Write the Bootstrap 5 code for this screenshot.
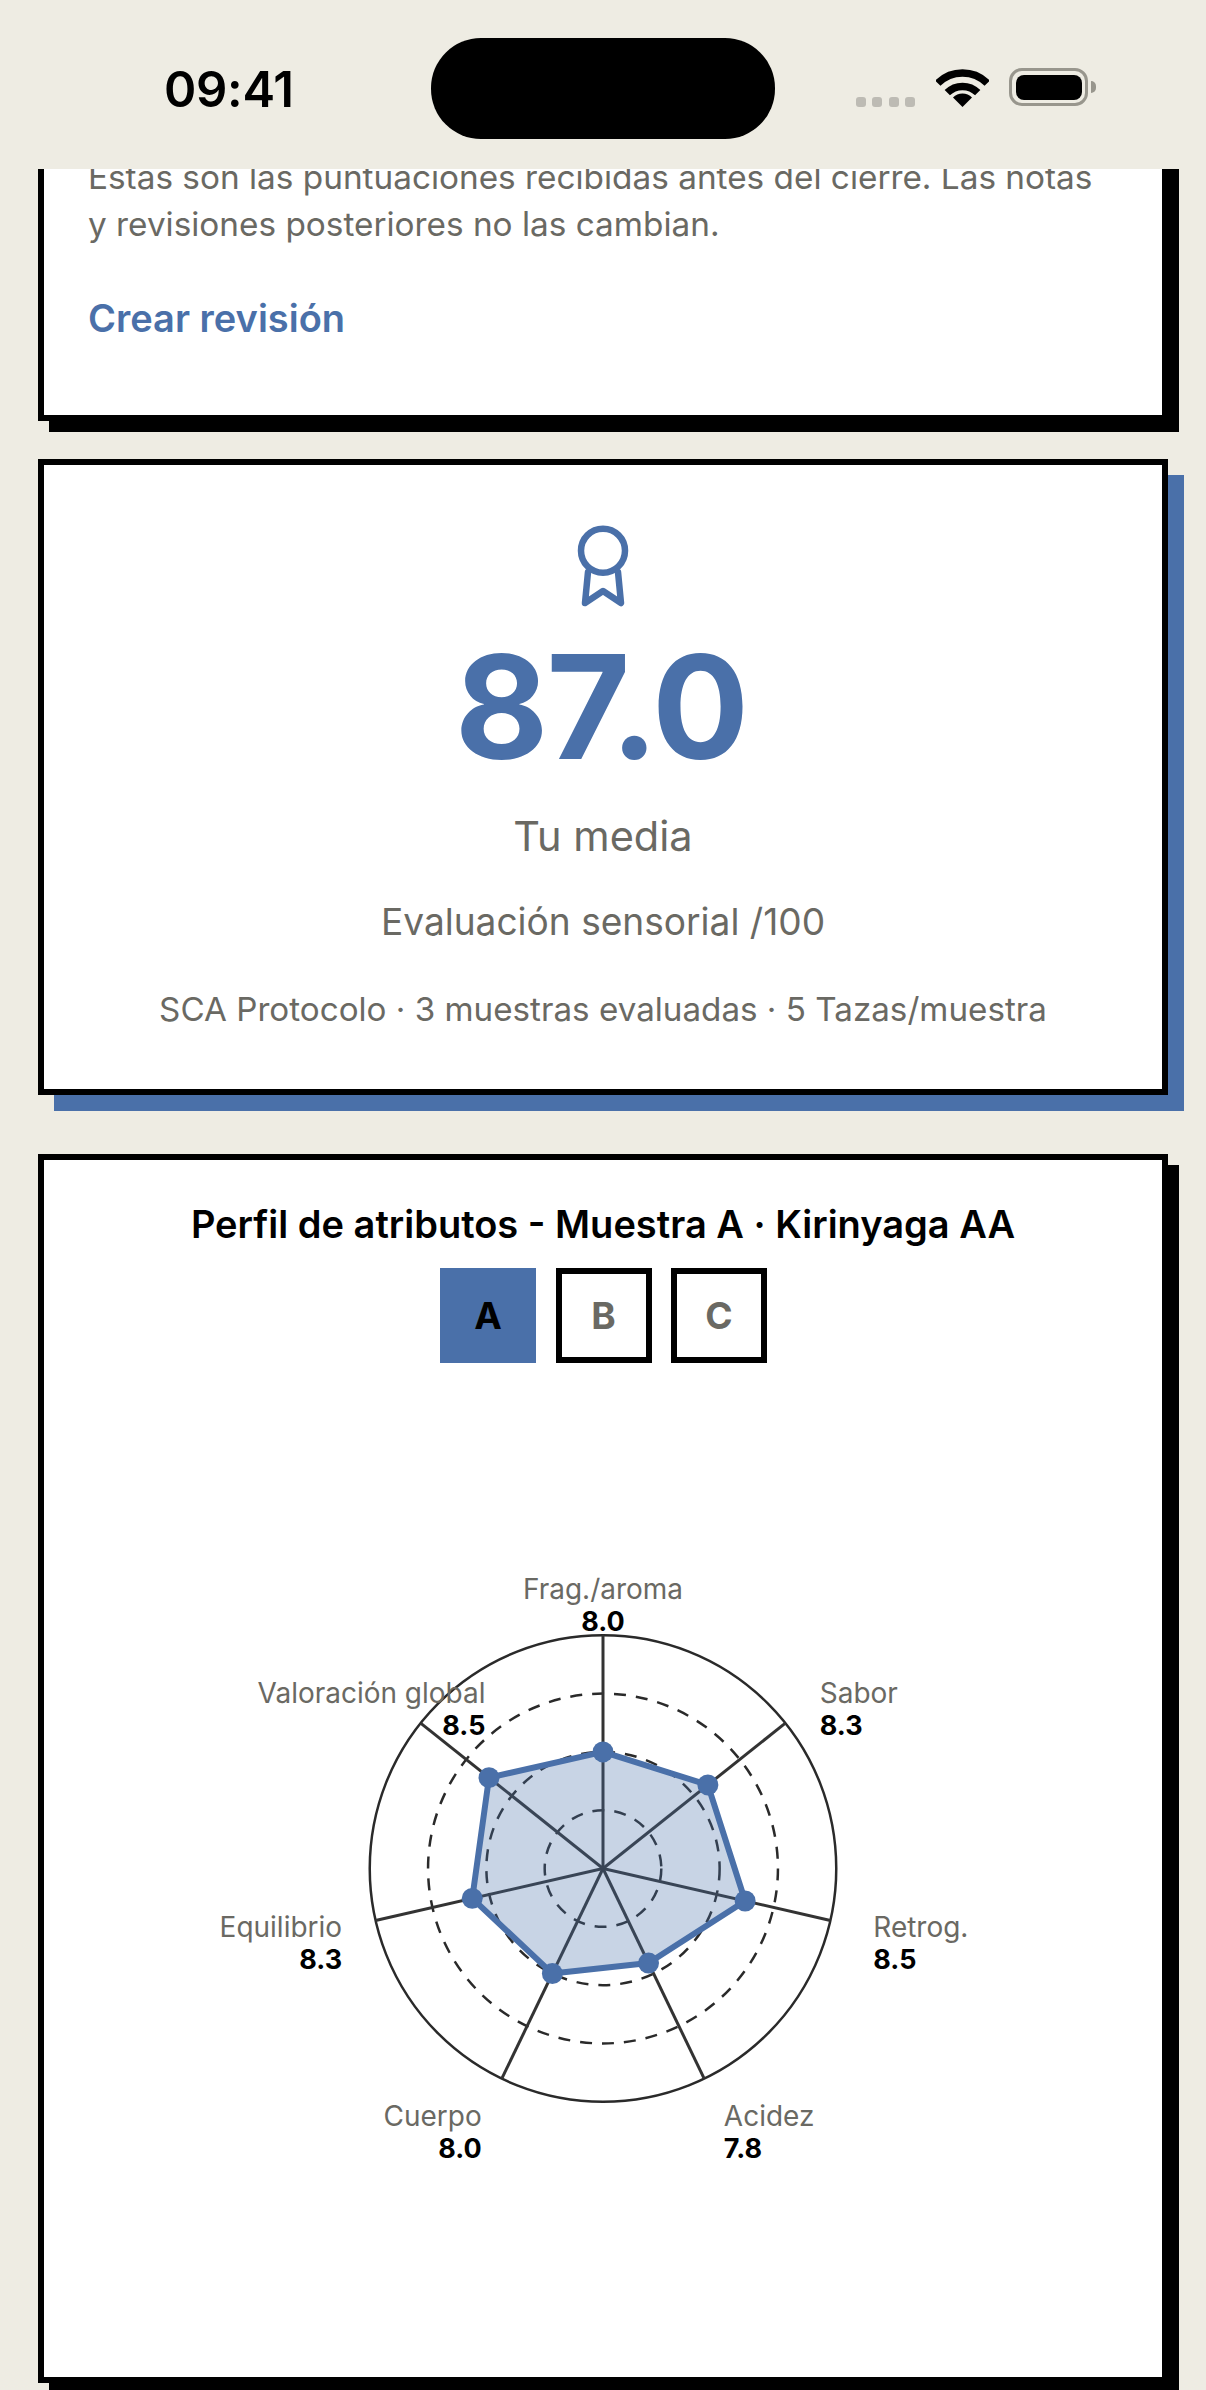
<!doctype html>
<html lang="es">
<head>
<meta charset="utf-8">
<title>Resultados</title>
<link href="https://cdn.jsdelivr.net/npm/bootstrap@5.3.0/dist/css/bootstrap.min.css" rel="stylesheet">
<style>
html,body{margin:0;background:#eeece3;font-family:Inter,"Noto Sans","Liberation Sans",sans-serif;}
body{width:1206px;height:2390px;overflow:hidden;}
.phone-bar{height:169px;background:#eeece3;position:relative;z-index:2;padding-left:164px;}
.clock{width:267px;margin-top:62px;font-size:49px;line-height:56px;font-weight:600;color:#000;letter-spacing:-.3px;}
.island{width:344px;height:101px;margin-top:38px;background:#000;border-radius:50px;}
.bar-icons{margin-left:81px;margin-top:68px;height:39px;}
.sig-dots{width:59px;height:10px;margin-top:29px;margin-right:21px;}
.sig-dots i{width:10px;height:10px;border-radius:3px;background:#bdbbb4;display:block;}
.batt{width:79px;height:38px;border:3.5px solid #98968d;border-radius:13px;padding:3.5px;margin-left:20px;position:relative;}
.batt b{display:block;height:100%;background:#000;border-radius:8px;}
.batt::after{content:"";position:absolute;right:-11px;top:10px;width:5px;height:12px;background:#98968d;border-radius:0 5px 5px 0;}
.scroller{height:2221px;overflow:hidden;}
.sheet{margin:0 38px;border:6px solid #000;border-radius:0;background:#fff;}
.sheet-first{margin-top:-40px;padding:25px 44px 0;height:292px;border-top:0;box-shadow:11px 11px 0 #000;}
.note{font-size:33.35px;line-height:47px;color:#6a6963;margin:0;white-space:nowrap;}
.rev-link{display:block;margin-top:46px;font-size:38px;line-height:48px;font-weight:600;color:#4a70a9;text-decoration:none;}
.sheet-score{margin-top:38px;height:636px;box-shadow:16px 16px 0 #4a70a9;padding-top:60px;}
.medal{display:block;margin:0 auto;width:60px;height:90px;}
.score{font-size:144px;line-height:144px;font-weight:700;color:#4a70a9;margin-top:20px;letter-spacing:-2px;padding-right:4px;}
.s1{font-size:41.5px;line-height:48px;color:#6a6963;margin-top:33px;}
.s2{font-size:37.1px;line-height:44px;color:#6a6963;margin-top:40px;}
.s3{font-size:33.2px;line-height:40px;color:#6a6963;margin-top:45px;}
.sheet-chart{margin-top:59px;height:1229px;box-shadow:11px 11px 0 #000;padding-top:40px;}
.chart-title{font-size:38px;line-height:48px;font-weight:600;color:#000;margin:0;}
.pick-row{margin-top:20px;padding-left:1px;}
.pick{width:96px;height:95px;padding:0;border:6px solid #000;border-radius:0;background:#fff;color:#6a6963;font-size:37px;font-weight:700;line-height:1;}
.pick-next{margin-left:19.5px;}
.pick-on{background:#4a70a9;border-color:#4a70a9;color:#000;}
.radar{display:block;margin-top:37px;}
.lb{font-size:28px;fill:#6a6963;font-family:Inter,"Noto Sans",sans-serif;}
.vl{font-size:27px;font-weight:700;fill:#000;font-family:Inter,"Noto Sans",sans-serif;}
</style>
</head>
<body>
<header class="phone-bar d-flex align-items-start">
  <div class="clock">09:41</div>
  <div class="island"></div>
  <div class="bar-icons d-flex align-items-start">
    <div class="sig-dots d-flex justify-content-between"><i></i><i></i><i></i><i></i></div>
    <svg width="53" height="39" viewBox="0 0 53 39" fill="none"><path d="M1.8 15.2A35 35 0 0 1 51.2 15.2M11.3 24.7A21.5 21.5 0 0 1 41.7 24.7" stroke="#000" stroke-width="7.5"/><path d="M26.5 39L17 29.5A13.4 13.4 0 0 1 36 29.5Z" fill="#000"/></svg>
    <div class="batt"><b></b></div>
  </div>
</header>
<main class="scroller">
  <section class="card sheet sheet-first">
    <p class="note">Estas son las puntuaciones recibidas antes del cierre. Las notas<br>y revisiones posteriores no las cambian.</p>
    <a class="rev-link" href="#">Crear revisión</a>
  </section>
  <section class="card sheet sheet-score text-center">
    <svg class="medal" viewBox="0 0 60 90" fill="none" stroke="#4a70a9" stroke-width="6.5" stroke-linecap="round" stroke-linejoin="round"><circle cx="30" cy="25.7" r="22"/><path d="M15 47L12 78L30 66L48 78L45 47"/></svg>
    <div class="score">87.0</div>
    <div class="s1">Tu media</div>
    <div class="s2">Evaluación sensorial /100</div>
    <div class="s3">SCA Protocolo · 3 muestras evaluadas · 5 Tazas/muestra</div>
  </section>
  <section class="card sheet sheet-chart text-center">
    <h2 class="chart-title">Perfil de atributos - Muestra A · Kirinyaga AA</h2>
    <div class="pick-row d-flex justify-content-center">
      <button class="btn pick pick-on" type="button">A</button>
      <button class="btn pick pick-next" type="button">B</button>
      <button class="btn pick pick-next" type="button">C</button>
    </div>
    <svg class="radar" id="radar" width="1118" height="978" viewBox="44 1400 1118 978" xmlns="http://www.w3.org/2000/svg"></svg>
  </section>
</main>
<script src="https://cdn.jsdelivr.net/npm/bootstrap@5.3.0/dist/js/bootstrap.bundle.min.js"></script>
<script>
var cx=603,cy=1869,R=233.5,vals=[8.0,8.3,8.5,7.8,8.0,8.3,8.5];
var h='';
[.25,.5,.75].forEach(function(f){h+='<circle cx="'+cx+'" cy="'+cy+'" r="'+(R*f)+'" fill="none" stroke="#2a2a2a" stroke-width="2.5" stroke-dasharray="12 10"/>';});
h+='<circle cx="'+cx+'" cy="'+cy+'" r="'+R+'" fill="none" stroke="#2a2a2a" stroke-width="2.5"/>';
var pts=[];
for(var i=0;i<7;i++){var a=i*2*Math.PI/7,s=Math.sin(a),c=Math.cos(a);
 h+='<line x1="'+cx+'" y1="'+cy+'" x2="'+(cx+R*s)+'" y2="'+(cy-R*c)+'" stroke="#333" stroke-width="3"/>';
 var r=R*(vals[i]-6)/4;pts.push([cx+r*s,cy-r*c]);}
h+='<polygon points="'+pts.map(function(p){return p.join(',')}).join(' ')+'" fill="#4a70a9" fill-opacity=".3" stroke="#4a70a9" stroke-width="6" stroke-linejoin="round"/>';
pts.forEach(function(p){h+='<circle cx="'+p[0]+'" cy="'+p[1]+'" r="10.5" fill="#4a70a9"/>';});
var L=[["Frag./aroma",603,1599,1631,"middle"],["Sabor",820,1703,1735,"start"],["Retrog.",873.6,1938,1970,"start"],["Acidez",724,2127,2159,"start"],["Cuerpo",481.6,2127,2159,"end"],["Equilibrio",341.8,1938,1970,"end"],["Valoración global",485.3,1703,1735,"end"]];
L.forEach(function(l,i){h+='<text class="lb" x="'+l[1]+'" y="'+l[2]+'" text-anchor="'+l[4]+'">'+l[0]+'</text><text class="vl" x="'+l[1]+'" y="'+l[3]+'" text-anchor="'+l[4]+'">'+vals[i].toFixed(1)+'</text>';});
document.getElementById('radar').innerHTML=h;
</script>
</body>
</html>
